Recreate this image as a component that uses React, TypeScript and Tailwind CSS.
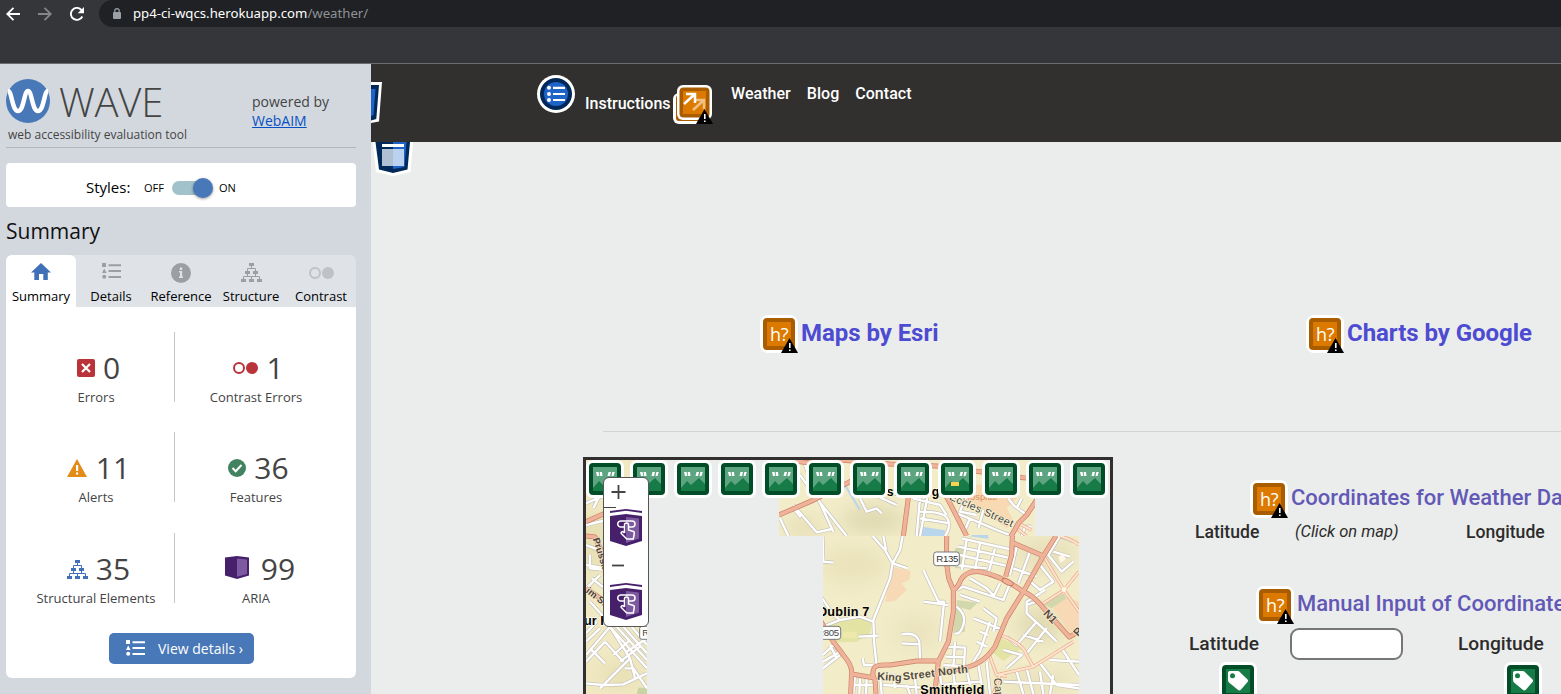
import React from "react";

const MAJOR = [
  "M0 15 L150 27 L290 33 L420 50 L550 68 L585 70",
  "M-183 180 L-90 140 L30 80 L60 55",
  "M-183 12 L-90 24 L0 14",
  "M215 15 L205 128 L190 243",
  "M300 90 L330 145 L380 243",
  "M590 135 L560 180 L535 205 L510 250",
];

const MAJOR_LOWER = [
  "M320 243 L319 320 L326 370 L340 405 L340 470 L325 560 L295 620 L284 717",
  "M340 405 Q355 396 362 375 Q380 345 420 350 Q480 360 550 410 Q580 420 620 470 L688 546 L717 530",
  "M517 243 L515 300 L497 365",
  "M515 262 L610 303",
  "M648 243 L610 303 L550 410 L500 490 L465 575 Q440 610 420 620 Q395 640 290 655",
  "M295 617 L230 618 L150 630 Q105 628 102 640 Q94 660 105 675 L108 717",
  "M-70 470 Q-55 510 -20 560 L10 600 Q35 630 35 650 L32 717",
  "M35 657 L100 668",
];

const PEACH = [
  "M612 305 L672 405 L717 470",
  "M717 350 L672 405 L610 445",
  "M480 540 Q550 565 560 600 L580 635",
  "M448 600 L470 660 L580 635 L700 560",
  "M460 717 L480 660 L500 664",
  "M660 243 Q700 255 717 270",
];

const MINOR_UPPER = [
  "M-183 80 L-120 60 L-70 130 L20 243",
  "M-135 165 L-120 185 L-128 165",
  "M-180 190 L-155 243",
  "M-140 150 L-70 232 L-25 222",
  "M-110 15 L-80 100 L-20 230",
  "M60 130 L80 170 L110 160 L125 175",
  "M60 100 L170 150",
  "M240 130 L230 243",
  "M262 128 L240 243",
  "M218 130 L300 150 L320 180",
  "M240 170 Q310 170 322 190 Q335 215 315 243",
  "M240 190 L330 205",
  "M350 175 L400 195 L470 225 L510 240",
  "M380 120 L360 170 L410 180",
  "M505 130 L520 150 L560 180",
  "M545 130 L530 160",
  "M390 190 L375 225",
  "M430 165 L415 220",
  "M545 243 L555 215 L575 215",
];

const MINOR_LOWER = [
  "M98 243 L135 285 L158 325 L150 370 L100 495 L103 570 L110 630",
  "M188 243 L180 285 L158 325 L203 340",
  "M130 243 L138 285",
  "M250 345 L295 440 L312 440 L300 560",
  "M250 440 L325 450",
  "M185 538 Q230 530 238 560 L240 615",
  "M-51 515 L0 495 L60 485 L100 500",
  "M55 545 L115 542",
  "M68 610 L72 630 L100 630",
  "M185 565 L240 568",
  "M-55 150 L-50 320 L-20 323",
  "M-60 420 L-20 480 L0 495",
  "M-51 600 L-20 570 L0 590 L-51 620 M-30 570 L-10 610 M-51 640 L0 600",
  "M355 275 L515 310 M360 300 L510 335 M365 250 L520 285 M345 330 L440 340 M380 255 L365 345 M420 265 L405 345 M465 280 L445 355",
  "M350 405 L370 395 L490 435 L510 385 M360 420 L420 440 M390 370 L440 400 L460 420 M480 385 L460 425",
  "M530 275 L510 360 M570 290 L535 385 M520 340 L590 365 M600 330 L640 380 L600 405 L560 370",
  "M700 260 L660 243 L625 300 L665 350 L700 320 M640 290 L690 305",
  "M430 460 L470 490 L460 530 M400 490 L490 525 M450 500 L420 590 L400 620 M410 560 L440 575 M420 530 L445 540",
  "M350 455 Q380 480 370 510 Q360 540 345 535",
  "M320 575 L375 578 L372 635 M345 560 L340 635 M318 605 L375 607 M310 630 L380 635",
  "M615 405 L560 440 L560 475 L620 530 L650 560 M590 500 L530 570 L500 545 M620 520 L560 595 M550 540 L610 560 M560 450 L590 440",
  "M490 585 L545 600 L500 640 M600 625 L650 690 L717 700 M560 640 L580 717 M630 615 L717 620 M530 650 L550 717 M665 580 L717 660",
  "M490 680 L717 690 M600 650 L610 717 M640 660 L630 717",
  "M45 660 L40 717 M60 670 L58 717 M80 670 L78 717 M120 660 L125 717 M160 655 L165 700 M200 690 L210 717 M225 670 L230 717 M30 690 L100 690 M130 690 L280 700",
  "M300 660 L305 690 L420 680 M340 655 L345 690 M380 645 L390 690 M415 630 L430 717 M440 620 L450 717",
];

const MINOR_LEFT = [
  "M18 145 L75 120 M40 160 L60 120 M18 210 L80 195",
  "M18 270 L70 290 M30 300 L30 340 L80 345 M18 330 L75 340",
  "M18 400 L60 360 M35 370 L75 400",
  "M18 600 L90 515 L150 610 L60 700 M30 580 L75 625 M18 560 L60 520 M18 535 L50 500 M18 620 L75 560",
  "M90 515 L201 640 M110 515 L201 615 M130 515 L201 595 M155 515 L201 570 M75 560 L130 620 M100 600 L150 555 M120 620 L180 575",
  "M18 685 L70 690 L130 688 L201 655 M150 610 L165 670 M135 640 L160 640 L201 700 M140 590 L201 550 M30 440 L75 490",
];

function Roads({ paths, kind }: { paths: string[]; kind: "major" | "minor" | "peach" }) {
  const casing = kind === "major" ? "#cc8163" : kind === "minor" ? "#c4c1b9" : "#eda488";
  const fill = kind === "major" ? "#efb39b" : kind === "minor" ? "#ffffff" : "#fce5cf";
  const width = kind === "major" ? 15 : kind === "minor" ? 11 : 10;
  const d = paths.join(" ");
  return (
    <g fill="none" strokeLinejoin="round">
      <path d={d} stroke={casing} strokeWidth={width} />
      <path d={d} stroke={fill} strokeWidth={width - 4} />
    </g>
  );
}

function StreetMap() {
  return (
    <svg className="block h-[234px] w-[524px]" viewBox="586 460 524 234">
      <defs>
        <clipPath id="upper"><rect x="-183" y="15" width="768" height="228" /></clipPath>
        <clipPath id="lower"><rect x="-51" y="243" width="768" height="474" /></clipPath>
        <clipPath id="left"><rect x="18" y="15" width="183" height="702" /></clipPath>
        <filter id="soft" x="-40%" y="-60%" width="180%" height="220%"><feGaussianBlur stdDeviation="30" /></filter>
      </defs>
      <g transform="translate(580 455) scale(.33333)">
        <g clipPath="url(#left)">
          <rect x="18" y="15" width="183" height="702" fill="#f0e9c3" />
          <ellipse cx="40" cy="260" rx="60" ry="90" fill="#e7dfb4" filter="url(#soft)" />
          <ellipse cx="120" cy="660" rx="70" ry="30" fill="#e6dcb0" filter="url(#soft)" />
          <path d="M175 698h30v20h-35z" fill="#ccd3a3" />
          <Roads paths={MINOR_LEFT} kind="minor" />
          <Roads paths={["M18 200 L85 170", "M18 243 L45 246 L75 310", "M18 400 L75 440"]} kind="major" />
          <g fontFamily="Liberation Sans" fontSize="29" fill="#4b4036" stroke="#f4ead0" strokeWidth="4" paintOrder="stroke">
            <text transform="translate(38 252) rotate(72)" fontWeight="bold">Prussia</text>
            <text transform="translate(16 411) rotate(38)" fontWeight="bold">im Street</text>
          </g>
          <text x="12" y="510" fontFamily="Liberation Sans" fontWeight="bold" fontSize="38" stroke="#fff" strokeWidth="4" paintOrder="stroke">ur Hill</text>
          <rect x="179" y="514" width="80" height="39" rx="7" fill="#fff" stroke="#777" strokeWidth="3" />
          <text x="187" y="543" fontFamily="Liberation Sans" fontSize="28" fill="#444">R805</text>
        </g>
      </g>
      <g transform="translate(840 455) scale(.33333)">
        <g clipPath="url(#upper)">
          <rect x="-183" y="15" width="768" height="228" fill="#f2ecc9" />
          <ellipse cx="100" cy="195" rx="100" ry="35" fill="#ddd7ae" filter="url(#soft)" />
          <ellipse cx="-110" cy="220" rx="60" ry="25" fill="#e2dab0" filter="url(#soft)" />
          <path d="M375 90 L500 85 L530 130 L500 160 L520 195 L500 220 L430 170 L375 140z" fill="#f8d9b1" />
          <path d="M248 215 L315 226 L312 243 L246 243z M395 240h50v5h-50z" fill="#b9d6ed" />
          <path d="M15 90 L60 165" fill="none" stroke="#bdd7e9" strokeWidth="7" />
          <Roads paths={MINOR_UPPER} kind="minor" />
          <Roads paths={["M530 220 L560 243 M535 205 L575 225"]} kind="peach" />
          <Roads paths={MAJOR} kind="major" />
          <text x="140" y="124" fontFamily="Liberation Sans" fontWeight="bold" fontSize="37" stroke="#f8f2d4" strokeWidth="4" paintOrder="stroke" textLength="158">s. Hung</text>
          <text x="370" y="135" fontFamily="Liberation Sans" fontSize="28" fill="#dc8f66">Hospital</text>
          <text transform="translate(326 133) rotate(24)" fontFamily="Liberation Sans" fontSize="32" fill="#444" stroke="#f8f2d4" strokeWidth="4" paintOrder="stroke" textLength="206">Eccles Street</text>
        </g>
        <g clipPath="url(#lower)">
          <rect x="-51" y="243" width="768" height="474" fill="#f2ecc9" />
          <ellipse cx="40" cy="330" rx="100" ry="50" fill="#e9e2b9" filter="url(#soft)" />
          <ellipse cx="230" cy="530" rx="70" ry="50" fill="#eae3bd" filter="url(#soft)" />
          <ellipse cx="600" cy="510" rx="70" ry="50" fill="#e0d9b1" filter="url(#soft)" />
          <ellipse cx="620" cy="300" rx="90" ry="50" fill="#e6dfb9" filter="url(#soft)" />
          <ellipse cx="590" cy="680" rx="120" ry="25" fill="#e5ddb6" filter="url(#soft)" />
          <path d="M155 335 L212 348 L208 375 L185 385 L200 405 L165 438 L135 440z M640 460 L670 425 L717 440 V515 L690 535z" fill="#f7d9b5" />
          <path d="M-51 510 L0 495 L60 488 L95 505 L90 535 L50 560 L-20 562 L-51 540z M455 590 L485 550 L545 580 L490 618z" fill="#e3e3a4" />
          <path d="M8 530h42v20H8z" fill="#eee8ab" />
          <path d="M350 435 L413 443 L390 465 L350 455z M345 457 L372 470 L375 530 L340 535z M345 280h25v60h-25z M610 447 L670 415 L680 430 L635 460z" fill="#d2d8ac" />
          <path d="M385 243h60v9z" fill="#b9d6ed" />
          <Roads paths={MINOR_LOWER} kind="minor" />
          <Roads paths={PEACH} kind="peach" />
          <Roads paths={MAJOR_LOWER} kind="major" />
          <path d="M655 305l15-8 8 15-16 12z M664 403l8-8 8 8-8 10z" fill="#fff7e7" />
          <ellipse cx="503" cy="381" rx="18" ry="8" transform="rotate(25 503 381)" fill="#efb197" stroke="#c9795c" strokeWidth="3" />
          <rect x="281" y="291" width="77" height="41" rx="8" fill="#fff" stroke="#777" strokeWidth="3" />
          <text x="289" y="321" fontFamily="Liberation Sans" fontSize="29" fill="#333" textLength="66">R135</text>
          <rect x="-75" y="514" width="77" height="39" rx="8" fill="#fff" stroke="#777" strokeWidth="3" />
          <text x="-69" y="543" fontFamily="Liberation Sans" fontSize="29" fill="#444" textLength="66">R805</text>
          <g fontFamily="Liberation Sans" fontWeight="bold" stroke="#f8f2d4" strokeWidth="4" paintOrder="stroke">
            <text x="-66" y="483" fontSize="38" textLength="154">Dublin 7</text>
            <text x="241" y="717" fontSize="38" textLength="192">Smithfield</text>
            <g fill="#554b43" fontSize="33">
              <text transform="translate(111 674) rotate(4)">King</text>
              <text transform="translate(190 676) rotate(-7)" textLength="196">Street North</text>
              <text transform="translate(608 477) rotate(46)">N1</text>
              <text transform="translate(715 546) rotate(-50)">R</text>
              <text transform="translate(461 670) rotate(84)" fontWeight="normal">Capel</text>
            </g>
          </g>
        </g>
      </g>
    </svg>
  );
}

function OutlineList({ className }: { className: string }) {
  return (
    <svg className={className} viewBox="0 0 19 16" fill="currentColor">
      <path d="M0 0h4v4H0zM2.2 5.5 4.6 10H0zM6.5 1.2H19v2H6.5zM6.5 7H19v2H6.5zM6.5 12.9H19v2H6.5z" />
      <circle cx="2.2" cy="13.7" r="2" />
    </svg>
  );
}

function Tree({ className }: { className: string }) {
  return (
    <svg className={className} viewBox="0 0 21 19">
      <path d="M8 0h5v3H8zM4 8h5v3H4zM12 8h5v3h-5zM0 16h5v3H0zM8 16h5v3H8zM16 16h5v3h-5z" fill="currentColor" />
      <path d="M10.5 3v2.5M6.5 8V5.5h8V8M6.5 11v2.5M14.5 11v2.5M2.5 16v-2.5h16V16M10.5 13.5V16" fill="none" stroke="currentColor" />
    </svg>
  );
}

function Circles({ className }: { className: string }) {
  return (
    <svg className={className} viewBox="0 0 25 12">
      <circle cx="6" cy="6" r="5" fill="none" stroke="currentColor" strokeWidth="2" />
      <circle cx="19" cy="6" r="6" fill="currentColor" />
    </svg>
  );
}

function Warning() {
  return (
    <svg className="absolute bottom-0 right-0 h-[15px] w-[17px]" viewBox="0 0 17 15">
      <path d="M8.5 0 17 15H0z" />
      <path d="M8 5h1.6v5H8zM8 11.5h1.6V13H8z" fill="#fff" />
    </svg>
  );
}

function HeadingBadge() {
  return (
    <span className="relative flex size-[38px] shrink-0 items-center justify-center rounded-[8px] bg-white">
      <span className="flex size-8 items-center justify-center rounded-[4px] border-4 border-[#a95c00] bg-[#dc7a00] font-['Open_Sans',sans-serif] text-[18px] font-normal leading-none tracking-[-0.3px] text-white">
        h?
      </span>
      <Warning />
    </span>
  );
}

function ImageBadge({ marked }: { marked?: boolean }) {
  return (
    <svg className="size-[38px] shrink-0" viewBox="0 0 38 38">
      <rect width="38" height="38" rx="7" fill="#fff" />
      <rect x="3" y="3" width="32" height="32" rx="4" fill="#004d28" />
      <path d="M7 7h24v24H7z" fill="#5da480" />
      <path d="M7 28l6-7 4 4 8-7 6 6v7H7z" fill="#177b48" />
      <path d="M10 12h2.5l1 4H11zM13.6 12H16l.5 4h-2.3zM22.500 12H25l-1 4h-2.500zM26.300 12h2.500l-1.300 4h-2z" fill="#fff" />
      {marked && <path d="M13 22h8v4h-8z" fill="#f7d34f" />}
    </svg>
  );
}

function AriaButtonBadge() {
  return (
    <svg className="h-[38px] w-8" viewBox="0 0 32 38">
      <path d="M0 2 16 0 32 2V4L16 1.800 0 4zM0 7 16 5 32 7V32L16 37 0 32z" fill="#47206c" />
      <path d="M16 8 29 9.500V29.500L16 34z" fill="#7d5a9f" />
      <path d="M14.500 18H11a3 3 0 0 1-.5-6H22a3 3 0 0 1 0 6h-3.500M14.500 24v-8a2 2 0 0 1 4 0v5l5 1.500c1 .4 1 1 .8 2l-1 5.500h-6.500l-5.500-5.500c-1-1 1-2.500 2-1.500l1.200 1" fill="none" stroke="#fff" strokeWidth="1.500" />
    </svg>
  );
}

function LabelBadge() {
  return (
    <svg className="size-[38px]" viewBox="0 0 38 38">
      <rect width="38" height="38" rx="7" fill="#fff" />
      <rect x="3" y="3" width="32" height="32" rx="4" fill="#004d28" />
      <path d="M7 7h24v24H7z" fill="#177b48" />
      <path d="M11 9h7.500c1 0 1.600.3 2.300 1l7.500 7.300c1 1 1 2 0 3l-6.500 7.400c-1 1-2 1-3 0L10 20.500C9.300 19.800 9 19 9 18v-7c0-1.300.7-2 2-2z" fill="#fff" />
      <circle cx="13.500" cy="13.700" r="2.500" fill="#177b48" />
    </svg>
  );
}

function Stat({ icon, value, label, className }: { icon: React.ReactNode; value: string; label: string; className: string }) {
  return (
    <div className={`flex h-[70px] flex-col items-center pt-[18px] text-[#444] ${className}`}>
      <div className="flex h-9 items-center pl-[5px]">
        {icon}
        <span className="text-[30px] leading-9">{value}</span>
      </div>
      <span className="mt-0.5 whitespace-nowrap text-[13px] leading-[18px]">{label}</span>
    </div>
  );
}

function Sidebar() {
  const tab = "flex h-full w-[70px] flex-col items-center text-[13px] leading-[18px] text-black";
  const iconBox = "flex h-8 items-center justify-center pt-[3px]";
  return (
    <aside className="h-[630px] w-[371px] shrink-0 overflow-hidden bg-[#d3d8df] pl-1.5 font-['Open_Sans',sans-serif]">
      <div className="flex h-[84px] w-[350px] border-b border-[#b4b7ba] pt-[15px]">
        <div className="w-[246px]">
          <div className="flex h-11 items-center">
            <svg className="size-11" viewBox="0 0 44 44">
              <circle cx="22" cy="22" r="22" fill="#4878b7" />
              <path d="M2 12C6 12 6 32 12 32S18 12 22 12s4 20 10 20 6-20 10-20" fill="none" stroke="#fff" strokeWidth="4.500" />
            </svg>
            <span className="ml-[9px] mt-[2px] text-[40px] font-light leading-[40px] tracking-[-0.2px] text-[#444]">WAVE</span>
          </div>
          <div className="ml-0.5 mt-1 text-[12px] leading-4 text-[#444]">web accessibility evaluation tool</div>
        </div>
        <div className="pt-[13px] text-[14px] leading-[19px] text-[#444]">
          powered by
          <br />
          <a className="text-[#0750c4] underline">WebAIM</a>
        </div>
      </div>
      <div className="mt-[15px] flex h-11 w-[350px] items-center rounded-[4px] bg-white pl-20 pt-[5px] text-[11px] text-black">
        <span className="w-[58px] text-[15px]">Styles:</span>
        <span className="w-7 pt-px">OFF</span>
        <span className="flex h-[14px] w-[41px] items-center justify-end rounded-full bg-[linear-gradient(90deg,#a1c1cb_85%,transparent_85%)]">
          <span className="size-5 shrink-0 rounded-full bg-[#4878b7] shadow-[0_1px_3px_rgba(0,0,0,.4)]" />
        </span>
        <span className="ml-1.5 pt-px">ON</span>
      </div>
      <h2 className="mt-2 h-10 text-[21px] leading-8 text-[#111]">Summary</h2>
      <div className="flex h-[52px] w-[350px] rounded-t-[6px] bg-[#dfe3e8]">
        <div className={`${tab} rounded-t-[6px] bg-white`}>
          <span className={iconBox}>
            <svg className="mb-0.5 h-[18px] w-[20px]" viewBox="0 0 20 18" fill="#4070b7"><path d="M10 0 0 9.500h3.300V17H8v-6h4.300v6h4.500V9.500H20z" /></svg>
          </span>
          Summary
        </div>
        <div className={tab}>
          <span className={iconBox}><OutlineList className="mb-1 h-4 w-[19px] text-[#9c9fa2]" /></span>
          Details
        </div>
        <div className={tab}>
          <span className={iconBox}>
            <svg className="size-5" viewBox="0 0 20 20"><circle cx="10" cy="10" r="10" fill="#9c9fa2" /><path d="M8.800 4.500h2.400v2.400H8.800zM8 8h3.200v5.500H12V15H8v-1.500h1v-4H8z" fill="#dfe3e8" /></svg>
          </span>
          Reference
        </div>
        <div className={tab}>
          <span className={iconBox}><Tree className="h-[19px] w-[21px] text-[#9c9fa2]" /></span>
          Structure
        </div>
        <div className={tab}>
          <span className={iconBox}><Circles className="ml-px h-3 w-[25px] text-[#bfc2c5]" /></span>
          Contrast
        </div>
      </div>
      <div className="h-[371px] w-[350px] rounded-b-[6px] bg-white pl-3 pt-[25px]">
        <div className="mb-[30px] flex">
          <Stat className="w-[156px]" value="0" label="Errors" icon={<svg className="mr-2 size-[18px]" viewBox="0 0 18 18"><rect width="18" height="18" rx="2" fill="#b93338" /><path d="m5 5 8 8m0-8-8 8" stroke="#fff" strokeWidth="2.200" /></svg>} />
          <Stat className="w-[163px] border-l border-[#c4c6c8]" value="1" label="Contrast Errors" icon={<Circles className="mr-2 h-3 w-[25px] text-[#b93338]" />} />
        </div>
        <div className="mb-[31px] flex">
          <Stat className="w-[156px]" value="11" label="Alerts" icon={<svg className="mr-[9px] h-[18px] w-5" viewBox="0 0 20 18"><path d="M10 0 20 18H0z" fill="#e28b17" /><path d="M9 6h2.200v6H9zM9 13.500h2.200v2H9z" fill="#fff" /></svg>} />
          <Stat className="w-[163px] border-l border-[#c4c6c8]" value="36" label="Features" icon={<svg className="mr-2 size-[18px]" viewBox="0 0 18 18"><circle cx="9" cy="9" r="9" fill="#428261" /><path d="m4.500 9 3.200 3.200L13.500 6" fill="none" stroke="#fff" strokeWidth="2" /></svg>} />
        </div>
        <div className="flex">
          <Stat className="w-[156px]" value="35" label="Structural Elements" icon={<Tree className="mr-2 h-[19px] w-[21px] text-[#4070b7]" />} />
          <Stat className="w-[163px] border-l border-[#c4c6c8]" value="99" label="ARIA" icon={<svg className="ml-[3px] mr-3 h-[23px] w-6 -translate-y-0.5" viewBox="0 0 24 23"><path d="M0 1.500 12 0l12 1.500V19.500L12 23 0 19.500z" fill="#47206c" /><path d="M12 2.500 22 3.600V18L12 20.800z" fill="#7d5a9f" /></svg>} />
        </div>
        <button className="ml-[91px] mt-[30px] flex h-[31px] w-[145px] items-center rounded-[5px] bg-[#4878b7] pb-px pl-[17px] text-[14px] text-white">
          <OutlineList className="mr-[13px] h-4 w-[19px]" />
          View details ›
        </button>
      </div>
    </aside>
  );
}

function NavIcons() {
  return (
    <svg className="absolute left-0 top-0 h-[114px] w-[50px]" viewBox="0 0 50 114">
      <path d="M0 18H11L8 57.500 0 59z" fill="#fff" />
      <path d="M0 21H8L5.300 55 0 56.500z" fill="#002858" />
      <path d="M0 25H4.500L2.500 51 0 52z" fill="#1e64c8" />
      <path d="M1.700 78H42L39.500 108 22 112 5 108z" fill="#fff" />
      <path d="M4.500 78H39L36.500 105.500 22 109 8 105.500z" fill="#002858" />
      <path d="M22 78H35.500L33.500 103 22 105z" fill="#1e64c8" />
      <path d="M11 80H33V83H11z" fill="#fff" />
      <path d="M11 85H22V102H11z" fill="#b0bfd2" />
      <path d="M22 85H33V102H22z" fill="#bad1f0" />
    </svg>
  );
}

export default function App() {
  return (
    <div className="h-[694px] w-[1561px] overflow-hidden bg-[#ebeded] font-['Roboto',sans-serif]">
      <div className="flex h-16 border-b border-[#6b6c6f] bg-[#35363a]">
        <div className="flex h-[27px] w-[99px] items-center text-white">
          <svg className="ml-1.5 h-[14px] w-[14px]" viewBox="0 0 14 14" fill="none" stroke="currentColor" strokeWidth="1.800"><path d="M14 7H1.500M7.500 .800 1.200 7l6.300 6.200" /></svg>
          <svg className="ml-[18px] h-[14px] w-[14px] text-[#85878b]" viewBox="0 0 14 14" fill="none" stroke="currentColor" strokeWidth="1.800"><path d="M0 7h12.500M6.500 .800 12.800 7l-6.300 6.200" /></svg>
          <svg className="ml-[18px] h-[14px] w-[14px]" viewBox="0 0 14 14"><path d="M12.300 9.500A6 6 0 1 1 11.300 2.800L12.500 4" fill="none" stroke="currentColor" strokeWidth="1.900" /><path d="M14 0v6.300H7.700z" fill="currentColor" /></svg>
        </div>
        <div className="flex h-[27px] flex-1 items-center rounded-l-full bg-[#202124] text-[14px] text-[#8f9296]">
          <svg className="ml-[14px] mr-3 h-[11px] w-2" viewBox="0 0 8 11"><rect y="4" width="8" height="7" rx="1" fill="#9aa0a6" /><path d="M1.800 4V2.800a2.200 2.200 0 0 1 4.400 0V4" fill="none" stroke="#9aa0a6" strokeWidth="1.200" /></svg>
          <span className="font-['Noto_Sans','Open_Sans',sans-serif] text-[13.200px]"><span className="text-white">pp4-ci-wqcs.herokuapp.com</span>/weather/</span>
        </div>
      </div>
      <div className="flex">
        <Sidebar />
        <main className="relative h-[630px] w-[1190px] overflow-hidden">
          <header className="flex h-[78px] items-start bg-[#31302e] text-[16px] font-medium leading-5 text-white">
            <svg className="ml-[166px] mt-[11px] size-[38px]" viewBox="0 0 38 38">
              <circle cx="19" cy="19" r="19" fill="#fff" />
              <circle cx="19" cy="19" r="16" fill="#002858" />
              <circle cx="19" cy="19" r="12" fill="#1e64c8" />
              <path d="M16 12.800h12M16 19h12M16 25h12" stroke="#fff" strokeWidth="2.200" />
              <path d="M12 10.800a2 2 0 1 1 0 4 2 2 0 0 1 0-4zM12 17a2 2 0 1 1 0 4 2 2 0 0 1 0-4zM12 23a2 2 0 1 1 0 4 2 2 0 0 1 0-4z" fill="#fff" />
            </svg>
            <span className="ml-[10px] mt-[30px] w-[88px]">Instructions</span>
            <span className="relative mt-[21px] h-[39px] w-10">
              <svg className="size-full" viewBox="0 0 40 39">
                <rect y="8" width="35" height="31" rx="6" fill="#fff" />
                <rect x="3" y="10" width="28" height="26" rx="3" fill="#a95c00" />
                <rect x="4" width="35" height="35" rx="6" fill="#fff" />
                <rect x="6.500" y="2.500" width="30" height="30" rx="4" fill="#a95c00" />
                <path d="M10 6h23v23H10z" fill="#dc7a00" />
                <path d="M20 25 31 15M22 15h9v9" fill="none" stroke="#f0bf83" strokeWidth="2.500" />
                <path d="M11 19 22 9M13 9h9v9" fill="none" stroke="#fff" strokeWidth="2.500" />
              </svg>
              <Warning />
            </span>
            <nav className="ml-[18px] mt-5 flex gap-4 tracking-[0.040px]"><span>Weather</span><span>Blog</span><span>Contact</span></nav>
          </header>
          <NavIcons />
          <div className="flex h-[289px] pl-[389px] pt-[173px] text-[24px] font-bold leading-8 tracking-[-0.050px] text-[#4d4bd1]">
            <h2 className="flex h-[38px] w-[546px] items-center gap-[3px]"><HeadingBadge /><span className="-mt-0.5">Maps by Esri</span></h2>
            <h2 className="flex h-[38px] items-center gap-[3px] whitespace-nowrap"><HeadingBadge /><span className="-mt-0.5">Charts by Google</span></h2>
          </div>
          <hr className="ml-[232px] border-[#d2d4d4]" />
          <div className="mt-[25px] flex">
            <section className="relative ml-[212px] h-[240px] w-[530px] shrink-0 overflow-hidden border-[3px] border-b-0 border-[#31302e]">
              <StreetMap />
              <div className="absolute left-0 top-0 flex gap-1.5">
                {Array.from({ length: 12 }, (_, i) => <ImageBadge key={i} marked={i === 8} />)}
              </div>
              <div className="absolute left-[17px] top-[17px] flex h-[150px] w-[46px] flex-col rounded-[6px] border border-[#555] bg-white">
                <svg className="h-[30px] w-[30px]" viewBox="0 0 30 30" fill="none" stroke="#444"><path d="M7.500 14h14M14.500 7v14" strokeWidth="1.800" /><path d="M0 29.500h12" /></svg>
                <div className="ml-1.5 h-[38px] pt-px"><AriaButtonBadge /></div>
                <svg className="h-9 w-[30px]" viewBox="0 0 30 36"><path d="M8 19.500h12" stroke="#444" strokeWidth="1.800" /></svg>
                <div className="ml-1.5 pt-px"><AriaButtonBadge /></div>
              </div>
            </section>
            <section className="w-[448px] overflow-hidden whitespace-nowrap pt-[23px] font-medium text-[#2d2c2b]">
              <h3 className="ml-[137px] flex h-[38px] items-center gap-[3px] text-[22px] text-[#6259b7]"><HeadingBadge /><span className="-mt-1">Coordinates for Weather Data</span></h3>
              <div className="ml-[82px] mt-0.5 flex h-6 items-center text-[17.600px]">
                <span className="w-[100px]">Latitude</span>
                <em className="w-[171px] pt-px text-[16.500px] font-normal">(Click on map)</em>
                <span>Longitude</span>
              </div>
              <h3 className="ml-[143px] mt-[42px] flex h-[38px] items-center gap-[3px] text-[22px] text-[#6259b7]"><HeadingBadge /><span className="-mt-1">Manual Input of Coordinates</span></h3>
              <div className="ml-[76px] mt-1 flex h-8 items-center text-[19.200px]">
                <span className="w-[101px]">Latitude</span>
                <input className="h-8 w-[113px] rounded-[9px] border-2 border-[#767676] bg-white" />
                <span className="ml-[55px]">Longitude</span>
              </div>
              <div className="ml-[106px] mt-0.5 flex gap-[247px]"><LabelBadge /><LabelBadge /></div>
            </section>
          </div>
        </main>
      </div>
    </div>
  );
}
